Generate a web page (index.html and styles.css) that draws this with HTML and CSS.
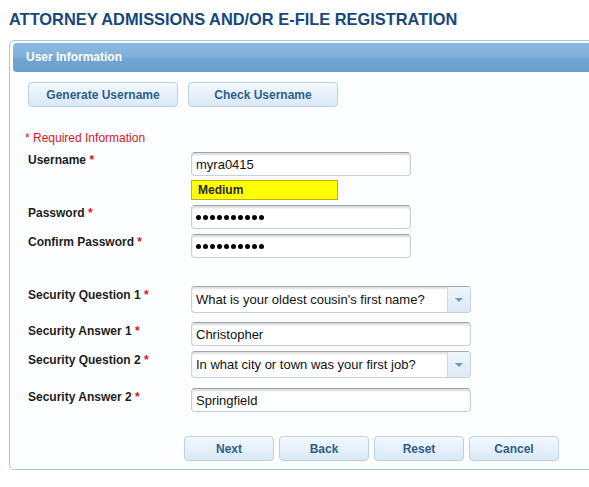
FILE: index.html
```html
<!DOCTYPE html>
<html>
<head>
<meta charset="utf-8">
<title>Attorney Admissions and/or E-File Registration</title>
<link rel="stylesheet" href="styles.css">
</head>
<body>
<h1 class="title">ATTORNEY ADMISSIONS AND/OR E-FILE REGISTRATION</h1>
<div class="panel">
  <div class="panel-header">User Information</div>
  <div class="tools">
    <button class="btn btn-wide">Generate Username</button>
    <button class="btn btn-wide">Check Username</button>
  </div>
  <p class="required">* Required Information</p>
  <div class="form">
    <div class="row">
      <label class="label">Username <span class="star">*</span></label>
      <input class="field field-short" type="text" value="myra0415">
    </div>
    <div class="row row-tight">
      <span class="label"></span>
      <div class="strength">Medium</div>
    </div>
    <div class="row">
      <label class="label">Password <span class="star">*</span></label>
      <div class="field field-short dots"><i></i><i></i><i></i><i></i><i></i><i></i><i></i><i></i><i></i><i></i></div>
    </div>
    <div class="row">
      <label class="label">Confirm Password <span class="star">*</span></label>
      <div class="field field-short dots"><i></i><i></i><i></i><i></i><i></i><i></i><i></i><i></i><i></i><i></i></div>
    </div>
    <div class="row row-gap-lg">
      <label class="label label-sec">Security Question 1 <span class="star">*</span></label>
      <div class="select"><span class="select-text">What is your oldest cousin's first name?</span><span class="select-arrow"></span></div>
    </div>
    <div class="row row-gap-md">
      <label class="label label-sec">Security Answer 1 <span class="star">*</span></label>
      <input class="field field-long" type="text" value="Christopher">
    </div>
    <div class="row">
      <label class="label label-sec">Security Question 2 <span class="star">*</span></label>
      <div class="select"><span class="select-text">In what city or town was your first job?</span><span class="select-arrow"></span></div>
    </div>
    <div class="row row-gap-md2">
      <label class="label label-sec">Security Answer 2 <span class="star">*</span></label>
      <input class="field field-long" type="text" value="Springfield">
    </div>
  </div>
  <div class="actions">
    <button class="btn btn-act">Next</button>
    <button class="btn btn-act">Back</button>
    <button class="btn btn-act">Reset</button>
    <button class="btn btn-act">Cancel</button>
  </div>
</div>
</body>
</html>
```
FILE: styles.css
```css
html, body {
  margin: 0;
  padding: 0;
  background: #ffffff;
  overflow: hidden;
}
body {
  padding-top: 10px;
  font-family: "Liberation Sans", Arial, sans-serif;
  font-size: 12px;
  color: #1e1e1e;
}
.title {
  margin: 0 0 11px 9px;
  font-size: 16.4px;
  line-height: 19px;
  font-weight: bold;
  color: #17477b;
  white-space: nowrap;
}
.panel {
  margin-left: 9px;
  width: 620px;
  border: 1px solid #aac7d6;
  border-radius: 5px;
  padding: 2px 3px 8px 3px;
  background: #fbfdfe;
}
.panel-header {
  height: 29px;
  line-height: 29px;
  padding-left: 13px;
  border-radius: 4px;
  background: linear-gradient(#8dbadf 0%, #7fb0d9 45%, #71a5d1 55%, #6a9fcc 100%);
  color: #ffffff;
  font-weight: bold;
  font-size: 12px;
}
.tools {
  display: flex;
  gap: 10px;
  margin: 10px 0 0 15px;
}
.btn {
  box-sizing: border-box;
  height: 25px;
  border: 1px solid #bcd2e5;
  border-radius: 4px;
  background: linear-gradient(#f2f8fd 0%, #e6f1fb 50%, #d9e9f7 100%);
  color: #2f5e8c;
  font-family: "Liberation Sans", Arial, sans-serif;
  font-weight: bold;
  font-size: 12px;
  padding: 0;
}
.btn-wide { width: 150px; }
.btn-act { width: 90px; }
.required {
  margin: 24px 0 0 12px;
  line-height: 14px;
  color: #d41a1a;
  font-size: 12px;
}
.form {
  margin: 7px 0 0 15px;
}
.row {
  display: flex;
  align-items: flex-start;
  margin-top: 5px;
}
.row:first-child { margin-top: 0; }
.row-tight { margin-top: 4px; }
.row-gap-lg { margin-top: 28px; }
.row-gap-md { margin-top: 9px; }
.row-gap-md2 { margin-top: 10px; }
.label {
  width: 163px;
  flex: none;
  padding-top: 1px;
  line-height: 14px;
  font-weight: bold;
  font-size: 12px;
  color: #1e1e1e;
}
.label-sec { padding-top: 2px; }
.star { color: #d41a1a; }
.field {
  box-sizing: border-box;
  height: 24px;
  margin: 0;
  border: 1px solid #c4d2dd;
  border-top-color: #9ea4aa;
  border-radius: 4px;
  box-shadow: inset 0 2px 2px rgba(0, 0, 0, 0.14);
  padding: 0 4px;
  background: #ffffff;
  font-family: "Liberation Sans", Arial, sans-serif;
  font-size: 13px;
  color: #111111;
  outline: none;
}
.field-short { width: 220px; }
.field-long { width: 280px; }
.dots {
  display: flex;
  align-items: center;
  gap: 2px;
}
.dots i {
  display: block;
  width: 5px;
  height: 5px;
  border-radius: 50%;
  background: #000000;
}
.strength {
  box-sizing: border-box;
  width: 147px;
  height: 20px;
  line-height: 18px;
  padding-left: 6px;
  border: 1px solid #b5b51c;
  background: #ffff00;
  font-weight: bold;
  font-size: 12px;
  color: #2a2a2a;
}
.select {
  box-sizing: border-box;
  display: flex;
  width: 280px;
  height: 27px;
  border: 1px solid #c4d2dd;
  border-top-color: #a3a9ae;
  border-radius: 4px;
  background: #ffffff;
  box-shadow: inset 0 2px 2px rgba(0, 0, 0, 0.12);
  overflow: hidden;
}
.select-text {
  flex: 1;
  padding-left: 4px;
  line-height: 25px;
  font-size: 13px;
  color: #111111;
  white-space: nowrap;
}
.select-arrow {
  width: 22px;
  flex: none;
  display: flex;
  align-items: center;
  justify-content: center;
  border-left: 1px solid #cbdae6;
  background: linear-gradient(#eef5fc, #dde9f5);
}
.select-arrow::after {
  content: "";
  width: 0;
  height: 0;
  border-left: 4px solid transparent;
  border-right: 4px solid transparent;
  border-top: 4px solid #6f9ac4;
}
.actions {
  display: flex;
  gap: 5px;
  margin: 24px 0 0 171px;
}
```
